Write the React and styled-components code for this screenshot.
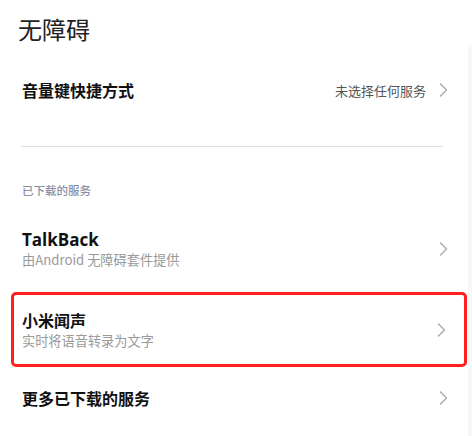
import React from "react";
import styled, { createGlobalStyle } from "styled-components";

const Global = createGlobalStyle`
  html, body { margin: 0; padding: 0; background: #fff; }
  body { font-family: "Noto Sans CJK SC", "Noto Sans", sans-serif; }
`;

const Page = styled.div`
  width: 472px;
  height: 436px;
  overflow: hidden;
  background: #fff;
  display: flex;
  flex-direction: column;
`;

const Title = styled.h1`
  margin: 0;
  padding: 12px 0 0 18px;
  height: 45px;
  box-sizing: border-box;
  font-size: 24px;
  font-weight: 400;
  line-height: 34px;
  color: #222;
`;

const Body = styled.div`
  flex: 1;
  border-right: 4px solid #f7f7f7;
  display: flex;
  flex-direction: column;
`;

const Row = styled.div`
  display: flex;
  align-items: center;
  flex-shrink: 0;
  margin: ${(p) => p.$margin || "0"};
  padding: ${(p) => p.$padding || "0 20px 0 22px"};
  height: ${(p) => p.$height}px;
  box-sizing: border-box;
  border: ${(p) => (p.$highlight ? "3px solid #ff1f1f" : "none")};
  border-radius: ${(p) => (p.$highlight ? "5px" : "0")};
`;

const Texts = styled.div`
  flex: 1;
  display: flex;
  flex-direction: column;
  gap: 1px;
`;

const Label = styled.div`
  font-weight: 700;
  color: #111;
  line-height: 21px;
  font-family: ${(p) => (p.$latin ? '"Open Sans", "Noto Sans CJK SC", sans-serif' : "inherit")};
  font-size: ${(p) => (p.$latin ? "17px" : "16px")};
`;

const Sub = styled.div`
  font-size: 13.2px;
  color: #9a9a9a;
  line-height: 18px;
`;

const Value = styled.span`
  font-size: 13px;
  color: #555;
  margin-right: 12px;
`;

const Chevron = () => (
  <svg width="10" height="16" viewBox="0 0 10 16">
    <path d="M2 1.5 L8.5 8 L2 14.5" fill="none" stroke="#a8a8a8" strokeWidth="1.3" />
  </svg>
);

const Divider = styled.hr`
  margin: 11px 25px 0 21px;
  flex-shrink: 0;
  border: none;
  border-top: 1px solid #dedede;
`;

const SectionHeader = styled.div`
  padding: 35px 0 0 22px;
  height: 59px;
  box-sizing: border-box;
  flex-shrink: 0;
  font-size: 11.5px;
  line-height: 16px;
  color: #8b8fa3;
  font-weight: 500;
`;

export default function App() {
  return (
    <Page>
      <Global />
      <Title>无障碍</Title>
      <Body>
        <Row $height={90}>
          <Texts>
            <Label>音量键快捷方式</Label>
          </Texts>
          <Value>未选择任何服务</Value>
          <Chevron />
        </Row>
        <Divider />
        <SectionHeader>已下载的服务</SectionHeader>
        <Row $height={86}>
          <Texts>
            <Label $latin>TalkBack</Label>
            <Sub>由Android 无障碍套件提供</Sub>
          </Texts>
          <Chevron />
        </Row>
        <Row $height={75} $highlight $margin="0 1px 0 11px" $padding="0 18px 0 8px">
          <Texts>
            <Label>小米闻声</Label>
            <Sub>实时将语音转录为文字</Sub>
          </Texts>
          <Chevron />
        </Row>
        <Row $height={62}>
          <Texts>
            <Label>更多已下载的服务</Label>
          </Texts>
          <Chevron />
        </Row>
      </Body>
    </Page>
  );
}
